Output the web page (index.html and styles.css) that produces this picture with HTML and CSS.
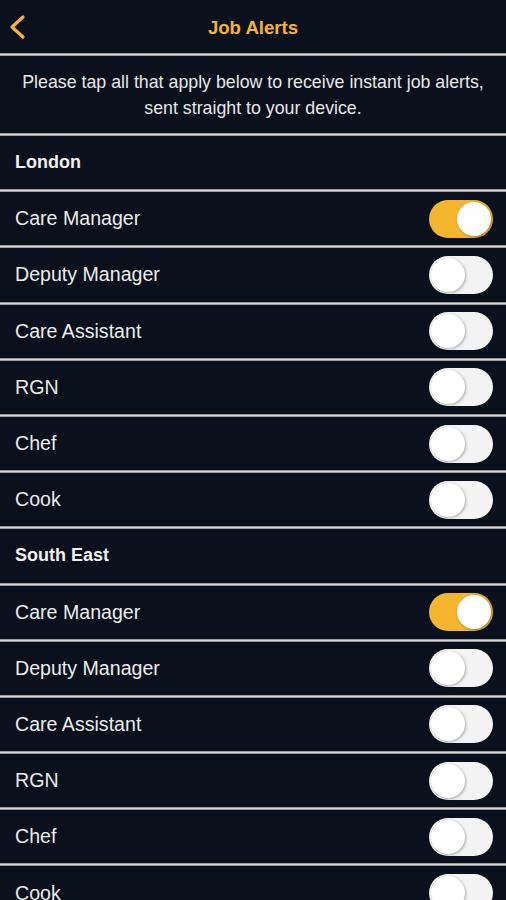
FILE: index.html
```html
<!DOCTYPE html>
<html lang="en">
<head>
  <meta charset="UTF-8" />
  <meta name="viewport" content="width=device-width, initial-scale=1.0"/>
  <title>Job Alerts</title>
  <link rel="stylesheet" href="styles.css">
</head>
<body>
  <header class="topbar line">
    <button class="back" aria-label="Back">
      <svg width="20" height="26" viewBox="0 0 20 26">
        <polyline points="16,3 5,13 16,23" fill="none" stroke="#f5b52e" stroke-width="3.2" stroke-linecap="round" stroke-linejoin="round"/>
      </svg>
    </button>
    <h1>Job Alerts</h1>
  </header>

  <p class="intro line">Please tap all that apply below to receive instant job alerts, sent straight to your device.</p>

  <section>
    <h2 class="region line">London</h2>
    <ul class="alerts">
      <li class="line">Care Manager <span class="switch on"></span></li>
      <li class="line">Deputy Manager <span class="switch"></span></li>
      <li class="line">Care Assistant <span class="switch"></span></li>
      <li class="line">RGN <span class="switch"></span></li>
      <li class="line">Chef <span class="switch"></span></li>
      <li class="line">Cook <span class="switch"></span></li>
    </ul>
  </section>

  <section>
    <h2 class="region line">South East</h2>
    <ul class="alerts">
      <li class="line">Care Manager <span class="switch on"></span></li>
      <li class="line">Deputy Manager <span class="switch"></span></li>
      <li class="line">Care Assistant <span class="switch"></span></li>
      <li class="line">RGN <span class="switch"></span></li>
      <li class="line">Chef <span class="switch"></span></li>
      <li class="line">Cook <span class="switch"></span></li>
    </ul>
  </section>
</body>
</html>
```

FILE: styles.css
```css
body {
  margin: 0;
  background: #0a101c;
  color: #ececec;
  font-family: "Liberation Sans", Arial, sans-serif;
}
.line {
  padding-bottom: 3px;
  background: linear-gradient(#7e7e7e, #d8d8d8 50%, #7e7e7e) bottom / 100% 3px no-repeat;
}
.topbar {
  height: 53px;
  display: flex;
  align-items: center;
  justify-content: center;
  position: relative;
}
.topbar h1 {
  margin: 0;
  padding-top: 2px;
  font-size: 18.6px;
  font-weight: bold;
  color: #f5b52e;
}
.back {
  position: absolute;
  left: 7px;
  top: 14px;
  padding: 0;
  border: 0;
  background: none;
  display: flex;
}
.intro {
  margin: 0;
  height: 77px;
  box-sizing: content-box;
  display: flex;
  align-items: center;
  justify-content: center;
  text-align: center;
  padding-left: 18px;
  padding-right: 18px;
  font-size: 17.8px;
  line-height: 26px;
  color: #e8e8e8;
}
.region {
  margin: 0;
  height: 53.2px;
  display: flex;
  align-items: center;
  padding-left: 15px;
  font-size: 18px;
  font-weight: bold;
  color: #f0f0f0;
}
.alerts {
  list-style: none;
  margin: 0;
  padding: 0;
}
.alerts li {
  height: 53.2px;
  display: flex;
  align-items: center;
  justify-content: space-between;
  padding-left: 15px;
  padding-right: 13px;
  font-size: 19.6px;
  color: #ececec;
}
.switch {
  width: 64px;
  height: 38px;
  border-radius: 19px;
  background: #f3f3f3;
  display: flex;
  align-items: center;
  padding: 2px;
  box-sizing: border-box;
}
.switch::before {
  content: "";
  width: 34px;
  height: 34px;
  border-radius: 50%;
  background: #fff;
  box-shadow: 1px 1px 3px rgba(0, 0, 0, 0.3);
}
.switch.on {
  background: #f5b52e;
  justify-content: flex-end;
}
```
